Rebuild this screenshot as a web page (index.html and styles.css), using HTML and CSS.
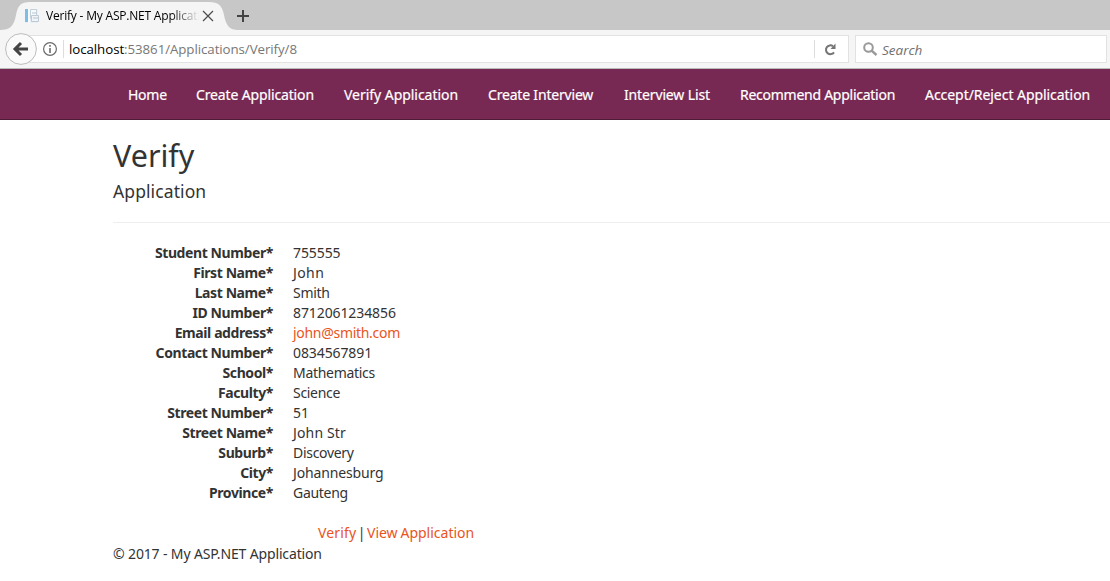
FILE: index.html
```html
<!DOCTYPE html>
<html lang="en">
<head>
<meta charset="utf-8">
<title>Verify - My ASP.NET Application</title>
<link rel="stylesheet" href="styles.css">
</head>
<body>
<header class="browser">
  <div class="tabs">
    <svg class="tab-shape" width="238" height="30" viewBox="0 0 238 30"><path d="M0 30C10 30 14 26 16 15C18 5 21 2 30 2H209C218 2 222 5 224 15C226 26 230 30 238 30Z" fill="#f5f5f5"/></svg>
    <div class="tab">
      <svg class="favicon" width="16" height="16" viewBox="0 0 16 16"><path d="M1 1h13v14H1z" fill="#e9eff5"/><path d="M1 1h3v13H1z" fill="#7dbde6"/><path d="M4 1h2v14H4z" fill="#f7f9fb"/><path d="M6.500 1.500h6v9h-6z" fill="#f7f9fb" stroke="#c4d0da"/><path d="M8 5h4" stroke="#b5c6d4"/><path d="M7.500 7.500h7v6h-7z" fill="#f1f4f7" stroke="#bccad5"/><path d="M9 10h5" stroke="#b5c4d0"/></svg>
      <span class="tab-title">Verify - My ASP.NET Application</span>
      <svg class="close" width="12" height="12" viewBox="0 0 12 12"><path d="M1 1l10 10M11 1L1 11" stroke="#4b4b4b" stroke-width="1.200"/></svg>
      <svg class="plus" width="12" height="12" viewBox="0 0 12 12"><path d="M6 0v12M0 6h12" stroke="#444" stroke-width="2"/></svg>
    </div>
  </div>
  <div class="toolbar">
    <div class="address">
      <svg class="info" width="14" height="14" viewBox="0 0 14 14"><circle cx="7" cy="7" r="6.400" fill="none" stroke="#6b6b6b" stroke-width="1.200"/><path d="M7 3v1.700M7 6v5" stroke="#6b6b6b" stroke-width="1.600"/></svg>
      <span class="url"><span class="host">localhost</span>:53861/Applications/Verify/8</span>
      <span class="reload"><svg width="13" height="13" viewBox="0 0 13 13"><path d="M10 9.300A4.400 4.400 0 1 1 9 3.200" fill="none" stroke="#757575" stroke-width="2"/><path d="M11.500 .5v5.500H6.500z" fill="#757575"/></svg></span>
    </div>
    <div class="search">
      <svg width="15" height="15" viewBox="0 0 15 15"><circle cx="5.500" cy="5.500" r="4.300" fill="none" stroke="#999" stroke-width="2"/><path d="M8.600 8.600l4.900 4.400" stroke="#999" stroke-width="2.400"/></svg>
      <span>Search</span>
    </div>
    <svg class="back" width="32" height="32" viewBox="0 0 32 32"><circle cx="16" cy="16" r="15.400" fill="#fafafa" stroke="#bcbcbc"/><path d="M16 10l-6 6 6 6M10.500 16H23" fill="none" stroke="#444" stroke-width="3"/></svg>
  </div>
</header>
<nav class="navbar">
  <a class="tight">Home</a><a>Create Application</a><a class="wide">Verify Application</a><a class="snug">Create Interview</a><a>Interview List</a><a class="tight">Recommend Application</a><a class="roomy">Accept/Reject Application</a>
</nav>
<main class="content">
  <h2>Verify</h2>
  <h4>Application</h4>
  <hr>
  <dl class="details">
    <dt>Student Number*</dt><dd class="num">755555</dd>
    <dt>First Name*</dt><dd class="john">John</dd>
    <dt>Last Name*</dt><dd>Smith</dd>
    <dt>ID Number*</dt><dd class="num">8712061234856</dd>
    <dt>Email address*</dt><dd><a>john@smith.com</a></dd>
    <dt>Contact Number*</dt><dd class="num">0834567891</dd>
    <dt>School*</dt><dd>Mathematics</dd>
    <dt>Faculty*</dt><dd>Science</dd>
    <dt>Street Number*</dt><dd class="num">51</dd>
    <dt>Street Name*</dt><dd class="street">John Str</dd>
    <dt>Suburb*</dt><dd>Discovery</dd>
    <dt>City*</dt><dd class="city">Johannesburg</dd>
    <dt>Province*</dt><dd>Gauteng</dd>
  </dl>
  <p class="actions"><a class="verify">Verify</a> | <a class="view">View Application</a></p>
  <footer>© 2017 - My ASP.NET Application</footer>
</main>
</body>
</html>
```
FILE: styles.css
```css
* { box-sizing: border-box; }
body { margin: 0; background: #fff; color: #333; font: 14px/20px "Noto Sans", "Open Sans", sans-serif; overflow: hidden; }
svg { display: block; flex: none; }
.browser { height: 69px; background: #f5f5f5; border-bottom: 1px solid #b9b9b9; font-family: "Open Sans", sans-serif; }
.tabs { height: 30px; background: #c7c7c7; position: relative; }
.tab-shape { position: absolute; left: 0; top: 0; }
.tab { position: relative; display: flex; align-items: center; height: 30px; padding: 2px 0 0 24px; }
.tab-title { width: 153px; margin-left: 6px; overflow: hidden; white-space: nowrap; font-size: 12px; letter-spacing: -.2px; color: #000; -webkit-mask-image: linear-gradient(90deg, #000 82%, transparent); mask-image: linear-gradient(90deg, #000 82%, transparent); }
.close { margin-left: 3px; }
.plus { margin-left: 23px; }
.toolbar { height: 38px; position: relative; display: flex; padding: 5px 3px 5px 20px; gap: 6px; }
.back { position: absolute; left: 5px; top: 3px; }
.address { width: 829px; height: 28px; display: flex; align-items: center; background: #fff; border: 1px solid #e2e2e2; padding-left: 22px; }
.url { margin-left: 6px; padding-left: 5px; border-left: 1px solid #ddd; line-height: 19px; height: 18px; font-size: 13.3px; letter-spacing: -.07px; color: #777; flex: 1; white-space: nowrap; }
.host { color: #000; }
.reload { width: 34px; height: 18px; border-left: 1px solid #ddd; display: flex; align-items: center; padding-left: 9px; }
.search { flex: 1; display: flex; align-items: center; gap: 4px; padding-left: 7px; background: #fff; border: 1px solid #e2e2e2; font-size: 13.5px; line-height: 22px; font-style: italic; color: #707070; }
.search span { padding-top: 1px; }
.navbar { height: 51px; background: #772953; border-bottom: 1px solid #4f1b37; padding: 16px 0 0 128px; display: grid; grid-template-columns: 38px 118px 114px 106px 86px 155px 165px; column-gap: 30px; color: #fff; white-space: nowrap; letter-spacing: -.14px; -webkit-text-stroke: .2px #fff; }
.tight { letter-spacing: -.26px; }
.snug { letter-spacing: -.19px; }
.wide { letter-spacing: -.04px; }
.roomy { letter-spacing: -.05px; }
.content { padding: 18px 0 0 113px; }
h2 { margin: 0; font-size: 30.5px; line-height: 34px; font-weight: 400; }
h4 { margin: 9px 0 0; font-size: 17.5px; line-height: 20px; letter-spacing: .1px; font-weight: 400; }
hr { margin: 21px 0 20px; border: 0; border-top: 1px solid #eee; }
.details { margin: 0; display: grid; grid-template-columns: 160px 1fr; column-gap: 20px; grid-auto-rows: 20px; }
dt { text-align: right; font-weight: 700; letter-spacing: -.4px; }
dd { margin: 0; letter-spacing: -.3px; }
.num { letter-spacing: -.1px; }
.john { letter-spacing: .4px; }
.street { letter-spacing: .15px; }
.city { letter-spacing: -.15px; }
.content a { color: #e95420; }
.actions { margin: 20px 0 0 205px; letter-spacing: -.1px; word-spacing: -2px; }
.verify { letter-spacing: .15px; }
.view { letter-spacing: 0; word-spacing: -.8px; }
footer { margin-top: 1px; letter-spacing: -.14px; }
```
